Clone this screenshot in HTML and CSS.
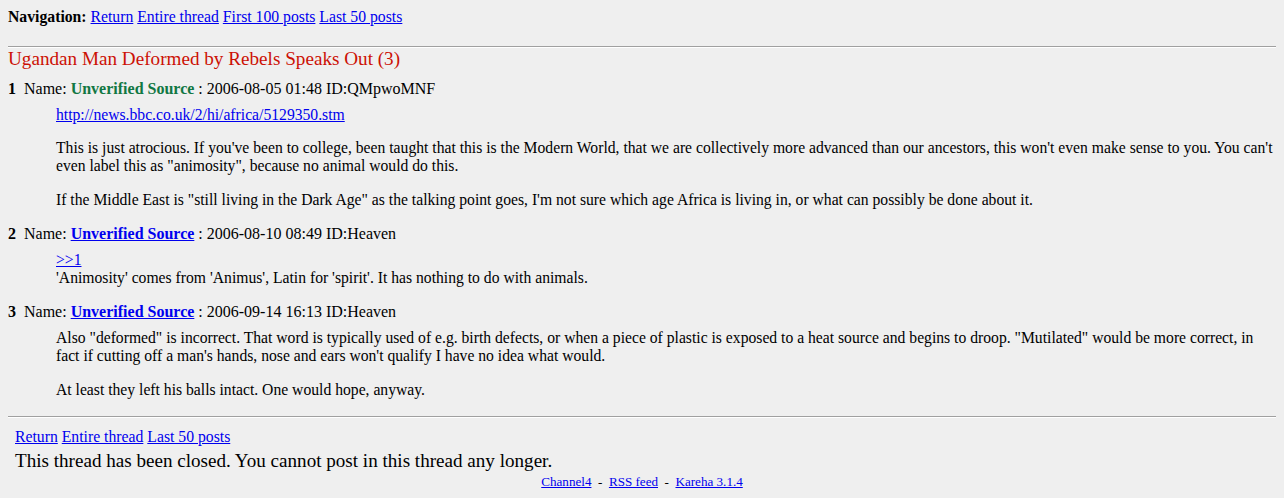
FILE: index.html
```html
<!DOCTYPE html>
<html>
<head>
<meta charset="utf-8">
<title>Ugandan Man Deformed by Rebels Speaks Out</title>
<link rel="stylesheet" href="styles.css">
</head>
<body>
<div class="navigation"><strong>Navigation:</strong> <a href="#">Return</a> <a href="#">Entire thread</a> <a href="#">First 100 posts</a> <a href="#">Last 50 posts</a></div>
<hr class="rule rule-top">
<div class="thread">
<h2 class="thread-title">Ugandan Man Deformed by Rebels Speaks Out (3)</h2>

<div class="reply">
<h3 class="reply-head"><span class="replynum">1</span> Name: <span class="postername">Unverified Source</span> : 2006-08-05 01:48 ID:QMpwoMNF</h3>
<div class="replytext">
<p class="linkline"><a href="#">http://news.bbc.co.uk/2/hi/africa/5129350.stm</a></p>
<p>This is just atrocious. If you've been to college, been taught that this is the Modern World, that we are collectively more advanced than our ancestors, this won't even make sense to you. You can't even label this as "animosity", because no animal would do this.</p>
<p>If the Middle East is "still living in the Dark Age" as the talking point goes, I'm not sure which age Africa is living in, or what can possibly be done about it.</p>
</div>
</div>

<div class="reply">
<h3 class="reply-head"><span class="replynum">2</span> Name: <a class="postername-link" href="#">Unverified Source</a> : 2006-08-10 08:49 ID:Heaven</h3>
<div class="replytext">
<p><a href="#">&gt;&gt;1</a><br>'Animosity' comes from 'Animus', Latin for 'spirit'. It has nothing to do with animals.</p>
</div>
</div>

<div class="reply">
<h3 class="reply-head"><span class="replynum">3</span> Name: <a class="postername-link" href="#">Unverified Source</a> : 2006-09-14 16:13 ID:Heaven</h3>
<div class="replytext">
<p>Also "deformed" is incorrect. That word is typically used of e.g. birth defects, or when a piece of plastic is exposed to a heat source and begins to droop. "Mutilated" would be more correct, in fact if cutting off a man's hands, nose and ears won't qualify I have no idea what would.</p>
<p>At least they left his balls intact. One would hope, anyway.</p>
</div>
</div>
</div>
<hr class="rule rule-bottom">
<div class="postform">
<div class="bottom-links"><a href="#">Return</a> <a href="#">Entire thread</a> <a href="#">Last 50 posts</a></div>
<div class="closed">This thread has been closed. You cannot post in this thread any longer.</div>
</div>
<div class="footer"><a href="#">Channel4</a>&nbsp; - &nbsp;<a href="#">RSS feed</a>&nbsp; - &nbsp;<a href="#">Kareha 3.1.4</a></div>
</body>
</html>
```

FILE: styles.css
```css
html, body {
  background: #efefef;
}
body {
  margin: 8px;
  font-family: "Liberation Serif", "Times New Roman", serif;
  font-size: 15.72px;
  line-height: 18px;
  color: #000;
}
a {
  color: #0000ee;
}
.navigation {
  margin: 0;
}
.rule {
  border: 0;
  border-top: 1px solid #a0a0a0;
  border-bottom: 1px solid #ffffff;
  height: 0;
}
.rule-top {
  margin: 20px 0 0 0;
}
.rule-bottom {
  margin: 17px 0 0 0;
}
.thread-title {
  margin: 0;
  font-size: 19.17px;
  font-weight: normal;
  color: #cc1105;
  line-height: 22px;
}
.reply {
  margin: 10px 0 0 0;
}
.reply + .reply {
  margin-top: 0;
}
.reply-head {
  margin: 0;
  font-size: 16px;
  font-weight: normal;
  line-height: 18px;
}
.replynum {
  font-weight: bold;
  margin-right: 4px;
}
.postername {
  font-weight: bold;
  color: #117743;
}
.postername-link {
  font-weight: bold;
}
.replytext {
  margin: 8px 0 0 48px;
  font-size: 15.66px;
}
.replytext p {
  margin: 0 0 16px 0;
  line-height: 18px;
}
.replytext p.linkline {
  margin-bottom: 15px;
}
.postform {
  padding: 0 7px;
  margin-top: 10px;
}
.bottom-links {
  line-height: 18px;
  margin-bottom: 3px;
}
.closed {
  font-size: 19.1px;
  line-height: 23px;
}
.footer {
  text-align: center;
  font-size: 13.1px;
  line-height: 15px;
  margin-top: 2px;
}
```
